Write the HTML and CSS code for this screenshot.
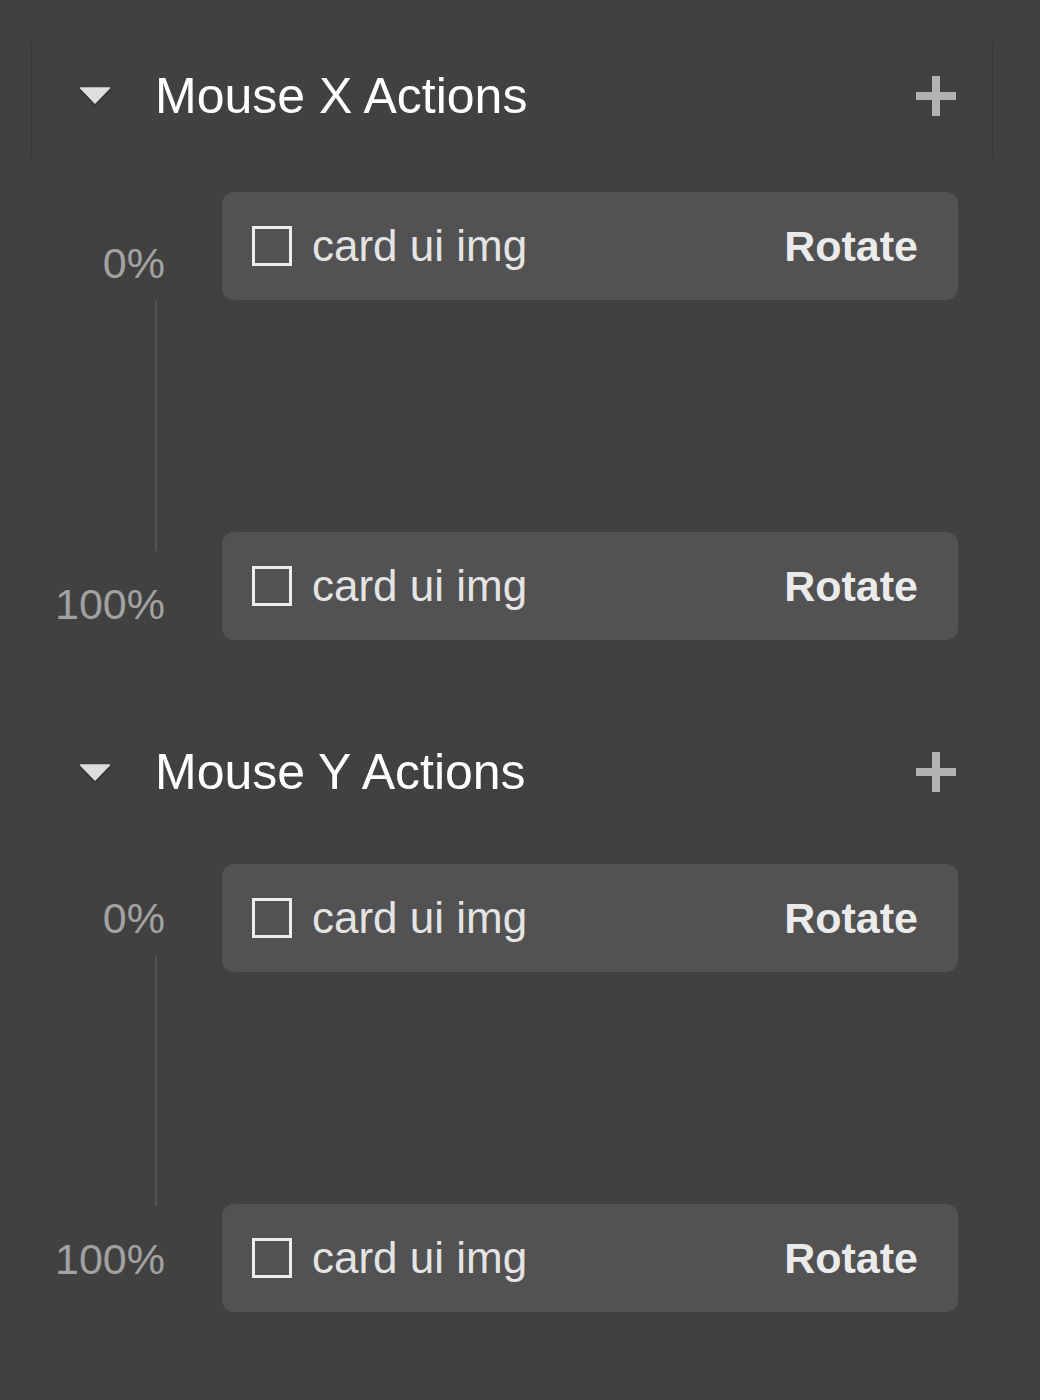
FILE: index.html
```html
<!DOCTYPE html>
<html lang="en">
<head>
<meta charset="utf-8">
<title>Mouse Actions</title>
<link rel="stylesheet" href="styles.css">
</head>
<body>
<main class="panel">
  <section class="section">
    <header class="section-header section-header--boxed">
      <svg class="caret" width="32" height="17" viewBox="0 0 32 17"><path d="M1.5 1 H30.5 L16 16 Z" fill="#dedede" stroke="#dedede" stroke-width="1.5" stroke-linejoin="round"/></svg>
      <h2 class="section-title">Mouse X Actions</h2>
      <svg class="add" width="40" height="40" viewBox="0 0 40 40"><rect x="16" y="0" width="8" height="40" fill="#b2b2b2"/><rect x="0" y="16" width="40" height="8" fill="#b2b2b2"/></svg>
    </header>
    <div class="timeline timeline--first">
      <div class="rail">
        <span class="pct">0%</span>
        <span class="rail-line"></span>
        <span class="pct">100%</span>
      </div>
      <div class="cards">
        <div class="card"><span class="check"></span><span class="card-name">card ui img</span><span class="card-action">Rotate</span></div>
        <div class="card"><span class="check"></span><span class="card-name">card ui img</span><span class="card-action">Rotate</span></div>
      </div>
    </div>
  </section>

  <section class="section">
    <header class="section-header">
      <svg class="caret" width="32" height="17" viewBox="0 0 32 17"><path d="M1.5 1 H30.5 L16 16 Z" fill="#dedede" stroke="#dedede" stroke-width="1.5" stroke-linejoin="round"/></svg>
      <h2 class="section-title">Mouse Y Actions</h2>
      <svg class="add" width="40" height="40" viewBox="0 0 40 40"><rect x="16" y="0" width="8" height="40" fill="#b2b2b2"/><rect x="0" y="16" width="40" height="8" fill="#b2b2b2"/></svg>
    </header>
    <div class="timeline">
      <div class="rail">
        <span class="pct">0%</span>
        <span class="rail-line"></span>
        <span class="pct">100%</span>
      </div>
      <div class="cards">
        <div class="card"><span class="check"></span><span class="card-name">card ui img</span><span class="card-action">Rotate</span></div>
        <div class="card"><span class="check"></span><span class="card-name">card ui img</span><span class="card-action">Rotate</span></div>
      </div>
    </div>
  </section>
</main>
</body>
</html>
```

FILE: styles.css
```css
html, body {
  margin: 0;
  padding: 0;
  background: #414141;
}

body {
  font-family: "Liberation Sans", Arial, sans-serif;
  width: 1040px;
  min-height: 1400px;
}

.panel {
  padding-top: 42px;
  display: flex;
  flex-direction: column;
  gap: 74px;
}

.section {
  display: flex;
  flex-direction: column;
  gap: 34px;
}

.section-header {
  box-sizing: border-box;
  margin: 0 47px 0 31px;
  height: 116px;
  padding: 0 36px 0 47px;
  display: flex;
  align-items: center;
  border-left: 1px solid transparent;
  border-right: 1px solid transparent;
}

.section-header--boxed {
  border-left-color: #383838;
  border-right-color: #383838;
  padding-bottom: 9px;
}

.caret {
  flex: none;
  filter: drop-shadow(0 1px 1px rgba(0, 0, 0, 0.45));
}

.section-title {
  margin: 0 0 0 44px;
  flex: 1;
  font-weight: 400;
  font-size: 50px;
  line-height: 50px;
  color: #ffffff;
}

.add {
  flex: none;
}

.timeline {
  display: grid;
  grid-template-columns: 165px 736px;
  column-gap: 57px;
}

.rail {
  display: flex;
  flex-direction: column;
  align-items: flex-end;
  padding-top: 29px;
}

.timeline--first .rail {
  padding-top: 46px;
}

.pct {
  height: 50px;
  line-height: 50px;
  font-size: 43px;
  color: #a2a2a2;
}

.rail-line {
  width: 2px;
  height: 250px;
  margin: 13px 8px 28px 0;
  background: #545454;
}

.cards {
  display: flex;
  flex-direction: column;
  gap: 232px;
}

.card {
  box-sizing: border-box;
  height: 108px;
  background: #525252;
  border-radius: 12px;
  padding: 0 40px 0 30px;
  display: flex;
  align-items: center;
}

.check {
  flex: none;
  box-sizing: border-box;
  width: 40px;
  height: 40px;
  border: 3px solid #ededed;
  margin-right: 20px;
}

.card-name {
  flex: 1;
  font-size: 44px;
  line-height: 50px;
  color: #e4e4e4;
}

.card-action {
  font-size: 43px;
  line-height: 50px;
  font-weight: 700;
  color: #ebebeb;
}
```
